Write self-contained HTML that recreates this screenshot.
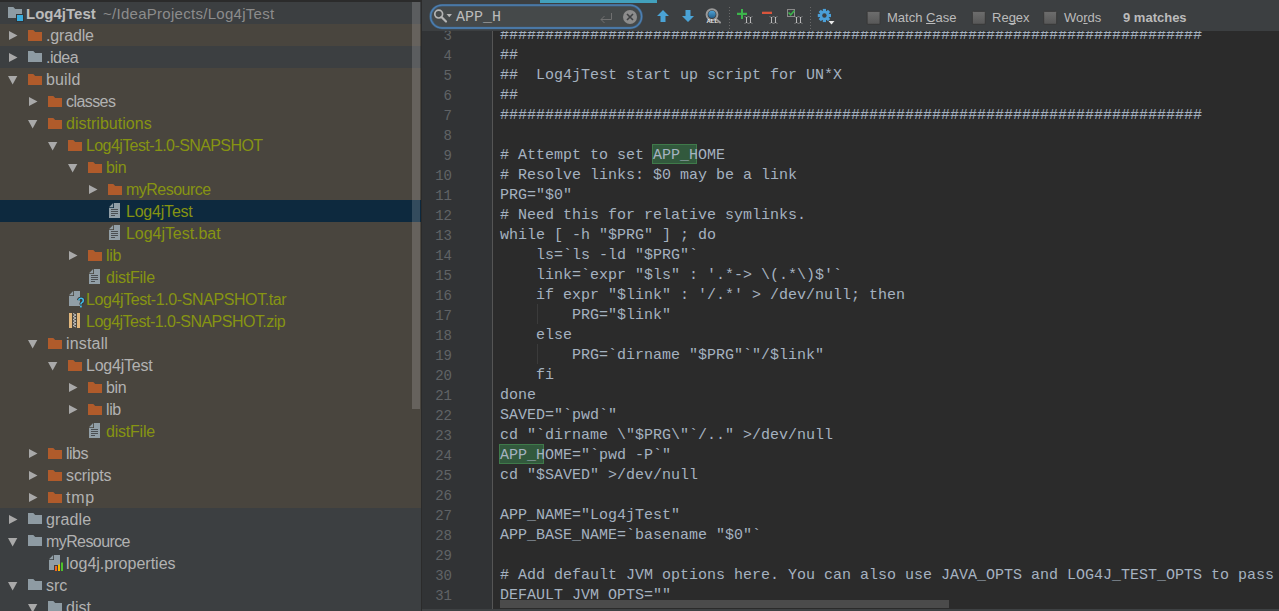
<!DOCTYPE html>
<html><head><meta charset="utf-8">
<style>
html,body{margin:0;padding:0;}
body{width:1279px;height:611px;overflow:hidden;position:relative;background:#2b2b2b;font-family:"Liberation Sans",sans-serif;}
.abs{position:absolute;}
#left{position:absolute;left:0;top:0;width:421px;height:611px;background:#3c3f41;overflow:hidden;}
.row{position:absolute;left:0;width:421px;height:22px;}
.ic{position:absolute;line-height:0;}
.ic svg{display:block;}
.tt{position:absolute;top:1px;height:22px;line-height:22px;font-size:16px;white-space:pre;}
#editor{position:absolute;left:422px;top:0;width:857px;height:611px;background:#2b2b2b;overflow:hidden;}
#gutter{position:absolute;left:422px;top:0;width:70px;height:611px;background:#313335;}
.ln{position:absolute;left:422px;width:30px;text-align:right;height:20px;line-height:20px;font-family:"Liberation Mono",monospace;font-size:14px;color:#606366;}
.cl{position:absolute;left:500px;height:20px;line-height:20px;font-family:"Liberation Mono",monospace;font-size:15px;color:#a5b2c0;white-space:pre;}
.hl{position:absolute;height:18px;background:#32593d;border:1px solid #3f7a4a;}
#toolbar{position:absolute;left:422px;top:0;width:857px;height:31px;background:#3c3f41;}
.cb{position:absolute;top:11px;width:12px;height:12px;background:#4f5254;border:1px solid #5e6060;border-radius:1px;}
.tl{position:absolute;top:0;height:31px;line-height:35px;font-size:13px;color:#bbbbbb;white-space:pre;}
u{text-decoration:underline;text-underline-offset:1px;text-decoration-skip-ink:none;}
</style></head><body>
<div id="left">
<div class="abs" style="left:0;top:0;width:421px;height:2px;background:#2b2b2b"></div>
<div class="abs" style="left:8px;top:7px;line-height:0"><svg width="16" height="15" viewBox="0 0 16 15"><path d="M0 0 H5.3 L7.2 2 H14 V11 H0Z" fill="#8e9ba3"/><rect x="8" y="7" width="8" height="8" fill="#323436"/><rect x="9" y="8" width="6" height="6" fill="#38abdc"/></svg></div>
<div class="abs" style="left:26px;top:2px;height:22px;line-height:23px;font-size:15px;color:#bbbbbb;white-space:pre;font-weight:bold">Log4jTest</div>
<div class="abs" style="left:103px;top:2px;height:22px;line-height:23px;font-size:15px;color:#8c8c8c;white-space:pre;letter-spacing:0.28px">~/IdeaProjects/Log4jTest</div>
<div class="row" style="top:24px;background:#49453e">
<div class="ic" style="left:9px;top:6px"><svg width="9" height="11" viewBox="0 0 9 11"><path d="M0 0.9 L8.5 5.4 L0 9.9Z" fill="#a9a9a9"/></svg></div>
<div class="ic" style="left:28px;top:6px"><svg width="15" height="12" viewBox="0 0 15 12"><path d="M0 0 H5.3 L7.2 2 H14 V11 H0Z" fill="#b05b2b"/></svg></div>
<div class="tt" style="left:46px;color:#b2b2b2;letter-spacing:-0.167px">.gradle</div>
</div>
<div class="row" style="top:46px;background:#3c3f41">
<div class="ic" style="left:9px;top:6px"><svg width="9" height="11" viewBox="0 0 9 11"><path d="M0 0.9 L8.5 5.4 L0 9.9Z" fill="#a9a9a9"/></svg></div>
<div class="ic" style="left:28px;top:5px"><svg width="15" height="12" viewBox="0 0 15 12"><path d="M0 0 H5.3 L7.2 2 H14 V11 H0Z" fill="#8e9ba3"/></svg></div>
<div class="tt" style="left:46px;color:#b2b2b2;letter-spacing:-0.525px">.idea</div>
</div>
<div class="row" style="top:68px;background:#49453e">
<div class="ic" style="left:8px;top:8px"><svg width="10" height="9" viewBox="0 0 10 9"><path d="M0 0 L9.3 0 L4.65 8.5Z" fill="#a9a9a9"/></svg></div>
<div class="ic" style="left:28px;top:6px"><svg width="15" height="12" viewBox="0 0 15 12"><path d="M0 0 H5.3 L7.2 2 H14 V11 H0Z" fill="#b05b2b"/></svg></div>
<div class="tt" style="left:46px;color:#b2b2b2;letter-spacing:0.125px">build</div>
</div>
<div class="row" style="top:90px;background:#49453e">
<div class="ic" style="left:29px;top:6px"><svg width="9" height="11" viewBox="0 0 9 11"><path d="M0 0.9 L8.5 5.4 L0 9.9Z" fill="#a9a9a9"/></svg></div>
<div class="ic" style="left:48px;top:6px"><svg width="15" height="12" viewBox="0 0 15 12"><path d="M0 0 H5.3 L7.2 2 H14 V11 H0Z" fill="#b05b2b"/></svg></div>
<div class="tt" style="left:66px;color:#b2b2b2;letter-spacing:-0.567px">classes</div>
</div>
<div class="row" style="top:112px;background:#49453e">
<div class="ic" style="left:28px;top:8px"><svg width="10" height="9" viewBox="0 0 10 9"><path d="M0 0 L9.3 0 L4.65 8.5Z" fill="#a9a9a9"/></svg></div>
<div class="ic" style="left:48px;top:6px"><svg width="15" height="12" viewBox="0 0 15 12"><path d="M0 0 H5.3 L7.2 2 H14 V11 H0Z" fill="#b05b2b"/></svg></div>
<div class="tt" style="left:66px;color:#869412;letter-spacing:0.025px">distributions</div>
</div>
<div class="row" style="top:134px;background:#49453e">
<div class="ic" style="left:48px;top:8px"><svg width="10" height="9" viewBox="0 0 10 9"><path d="M0 0 L9.3 0 L4.65 8.5Z" fill="#a9a9a9"/></svg></div>
<div class="ic" style="left:68px;top:6px"><svg width="15" height="12" viewBox="0 0 15 12"><path d="M0 0 H5.3 L7.2 2 H14 V11 H0Z" fill="#b05b2b"/></svg></div>
<div class="tt" style="left:86px;color:#869412;letter-spacing:-0.59px">Log4jTest-1.0-SNAPSHOT</div>
</div>
<div class="row" style="top:156px;background:#49453e">
<div class="ic" style="left:68px;top:8px"><svg width="10" height="9" viewBox="0 0 10 9"><path d="M0 0 L9.3 0 L4.65 8.5Z" fill="#a9a9a9"/></svg></div>
<div class="ic" style="left:88px;top:6px"><svg width="15" height="12" viewBox="0 0 15 12"><path d="M0 0 H5.3 L7.2 2 H14 V11 H0Z" fill="#b05b2b"/></svg></div>
<div class="tt" style="left:106px;color:#869412;letter-spacing:-0.4px">bin</div>
</div>
<div class="row" style="top:178px;background:#49453e">
<div class="ic" style="left:89px;top:6px"><svg width="9" height="11" viewBox="0 0 9 11"><path d="M0 0.9 L8.5 5.4 L0 9.9Z" fill="#a9a9a9"/></svg></div>
<div class="ic" style="left:108px;top:6px"><svg width="15" height="12" viewBox="0 0 15 12"><path d="M0 0 H5.3 L7.2 2 H14 V11 H0Z" fill="#b05b2b"/></svg></div>
<div class="tt" style="left:126px;color:#869412;letter-spacing:-0.522px">myResource</div>
</div>
<div class="row" style="top:200px;background:#0d293e">
<div class="ic" style="left:109px;top:3px"><svg width="12" height="16" viewBox="0 0 12 16"><path d="M5 0 H11 V15 H0 V5 H5Z" fill="#919ea6"/><path d="M0 4.2 L4.2 0 V4.2Z" fill="#919ea6"/><g fill="#4b4f52"><rect x="2" y="6" width="7" height="1"/><rect x="2" y="8" width="7" height="1"/><rect x="2" y="10" width="7" height="1"/><rect x="2" y="12" width="4" height="1"/></g></svg></div>
<div class="tt" style="left:126px;color:#869412;letter-spacing:-0.212px">Log4jTest</div>
</div>
<div class="row" style="top:222px;background:#49453e">
<div class="ic" style="left:109px;top:3px"><svg width="12" height="16" viewBox="0 0 12 16"><path d="M5 0 H11 V15 H0 V5 H5Z" fill="#919ea6"/><path d="M0 4.2 L4.2 0 V4.2Z" fill="#919ea6"/><g fill="#4b4f52"><rect x="2" y="6" width="7" height="1"/><rect x="2" y="8" width="7" height="1"/><rect x="2" y="10" width="7" height="1"/><rect x="2" y="12" width="4" height="1"/></g></svg></div>
<div class="tt" style="left:126px;color:#869412;letter-spacing:-0.05px">Log4jTest.bat</div>
</div>
<div class="row" style="top:244px;background:#49453e">
<div class="ic" style="left:69px;top:6px"><svg width="9" height="11" viewBox="0 0 9 11"><path d="M0 0.9 L8.5 5.4 L0 9.9Z" fill="#a9a9a9"/></svg></div>
<div class="ic" style="left:88px;top:6px"><svg width="15" height="12" viewBox="0 0 15 12"><path d="M0 0 H5.3 L7.2 2 H14 V11 H0Z" fill="#b05b2b"/></svg></div>
<div class="tt" style="left:106px;color:#869412;letter-spacing:-0.35px">lib</div>
</div>
<div class="row" style="top:266px;background:#49453e">
<div class="ic" style="left:89px;top:3px"><svg width="12" height="16" viewBox="0 0 12 16"><path d="M5 0 H11 V15 H0 V5 H5Z" fill="#919ea6"/><path d="M0 4.2 L4.2 0 V4.2Z" fill="#919ea6"/><g fill="#4b4f52"><rect x="2" y="6" width="7" height="1"/><rect x="2" y="8" width="7" height="1"/><rect x="2" y="10" width="7" height="1"/><rect x="2" y="12" width="4" height="1"/></g></svg></div>
<div class="tt" style="left:106px;color:#869412;letter-spacing:-0.229px">distFile</div>
</div>
<div class="row" style="top:288px;background:#49453e">
<div class="ic" style="left:69px;top:3px"><svg width="16" height="17" viewBox="0 0 16 17"><path d="M5 0 H11 V15 H0 V5 H5Z" fill="#919ea6"/><path d="M0 4.2 L4.2 0 V4.2Z" fill="#919ea6"/><path d="M9.6 9.3 Q10 7.3 12 7.3 Q14.3 7.3 14.3 9.4 Q14.3 10.8 12.8 11.6 Q11.9 12.1 11.9 13.4" fill="none" stroke="#383633" stroke-width="3.2"/><path d="M9.6 9.3 Q10 7.3 12 7.3 Q14.3 7.3 14.3 9.4 Q14.3 10.8 12.8 11.6 Q11.9 12.1 11.9 13.4" fill="none" stroke="#3dbbe8" stroke-width="1.6"/><rect x="11" y="14.6" width="1.8" height="1.8" fill="#3dbbe8"/></svg></div>
<div class="tt" style="left:86px;color:#869412;letter-spacing:-0.404px">Log4jTest-1.0-SNAPSHOT.tar</div>
</div>
<div class="row" style="top:310px;background:#49453e">
<div class="ic" style="left:69px;top:3px"><svg width="12" height="16" viewBox="0 0 12 16"><rect x="0" y="0" width="3" height="15" fill="#e0b67c"/><rect x="8" y="0" width="3" height="15" fill="#e0b67c"/><path d="M4 0.5 L7 2 L4 3.5 L7 5 L4 6.5 L7 8 L4 9.5 L7 11 L4 12.5 L7 14" stroke="#c8c8c8" stroke-width="1" fill="none"/></svg></div>
<div class="tt" style="left:86px;color:#869412;letter-spacing:-0.512px">Log4jTest-1.0-SNAPSHOT.zip</div>
</div>
<div class="row" style="top:332px;background:#49453e">
<div class="ic" style="left:28px;top:8px"><svg width="10" height="9" viewBox="0 0 10 9"><path d="M0 0 L9.3 0 L4.65 8.5Z" fill="#a9a9a9"/></svg></div>
<div class="ic" style="left:48px;top:6px"><svg width="15" height="12" viewBox="0 0 15 12"><path d="M0 0 H5.3 L7.2 2 H14 V11 H0Z" fill="#b05b2b"/></svg></div>
<div class="tt" style="left:66px;color:#b2b2b2;letter-spacing:0.167px">install</div>
</div>
<div class="row" style="top:354px;background:#49453e">
<div class="ic" style="left:48px;top:8px"><svg width="10" height="9" viewBox="0 0 10 9"><path d="M0 0 L9.3 0 L4.65 8.5Z" fill="#a9a9a9"/></svg></div>
<div class="ic" style="left:68px;top:6px"><svg width="15" height="12" viewBox="0 0 15 12"><path d="M0 0 H5.3 L7.2 2 H14 V11 H0Z" fill="#b05b2b"/></svg></div>
<div class="tt" style="left:86px;color:#b2b2b2;letter-spacing:-0.225px">Log4jTest</div>
</div>
<div class="row" style="top:376px;background:#49453e">
<div class="ic" style="left:69px;top:6px"><svg width="9" height="11" viewBox="0 0 9 11"><path d="M0 0.9 L8.5 5.4 L0 9.9Z" fill="#a9a9a9"/></svg></div>
<div class="ic" style="left:88px;top:6px"><svg width="15" height="12" viewBox="0 0 15 12"><path d="M0 0 H5.3 L7.2 2 H14 V11 H0Z" fill="#b05b2b"/></svg></div>
<div class="tt" style="left:106px;color:#b2b2b2;letter-spacing:-0.3px">bin</div>
</div>
<div class="row" style="top:398px;background:#49453e">
<div class="ic" style="left:69px;top:6px"><svg width="9" height="11" viewBox="0 0 9 11"><path d="M0 0.9 L8.5 5.4 L0 9.9Z" fill="#a9a9a9"/></svg></div>
<div class="ic" style="left:88px;top:6px"><svg width="15" height="12" viewBox="0 0 15 12"><path d="M0 0 H5.3 L7.2 2 H14 V11 H0Z" fill="#b05b2b"/></svg></div>
<div class="tt" style="left:106px;color:#b2b2b2;letter-spacing:-0.4px">lib</div>
</div>
<div class="row" style="top:420px;background:#49453e">
<div class="ic" style="left:89px;top:3px"><svg width="12" height="16" viewBox="0 0 12 16"><path d="M5 0 H11 V15 H0 V5 H5Z" fill="#919ea6"/><path d="M0 4.2 L4.2 0 V4.2Z" fill="#919ea6"/><g fill="#4b4f52"><rect x="2" y="6" width="7" height="1"/><rect x="2" y="8" width="7" height="1"/><rect x="2" y="10" width="7" height="1"/><rect x="2" y="12" width="4" height="1"/></g></svg></div>
<div class="tt" style="left:106px;color:#869412;letter-spacing:-0.214px">distFile</div>
</div>
<div class="row" style="top:442px;background:#49453e">
<div class="ic" style="left:29px;top:6px"><svg width="9" height="11" viewBox="0 0 9 11"><path d="M0 0.9 L8.5 5.4 L0 9.9Z" fill="#a9a9a9"/></svg></div>
<div class="ic" style="left:48px;top:6px"><svg width="15" height="12" viewBox="0 0 15 12"><path d="M0 0 H5.3 L7.2 2 H14 V11 H0Z" fill="#b05b2b"/></svg></div>
<div class="tt" style="left:66px;color:#b2b2b2;letter-spacing:-0.533px">libs</div>
</div>
<div class="row" style="top:464px;background:#49453e">
<div class="ic" style="left:29px;top:6px"><svg width="9" height="11" viewBox="0 0 9 11"><path d="M0 0.9 L8.5 5.4 L0 9.9Z" fill="#a9a9a9"/></svg></div>
<div class="ic" style="left:48px;top:6px"><svg width="15" height="12" viewBox="0 0 15 12"><path d="M0 0 H5.3 L7.2 2 H14 V11 H0Z" fill="#b05b2b"/></svg></div>
<div class="tt" style="left:66px;color:#b2b2b2;letter-spacing:-0.117px">scripts</div>
</div>
<div class="row" style="top:486px;background:#49453e">
<div class="ic" style="left:29px;top:6px"><svg width="9" height="11" viewBox="0 0 9 11"><path d="M0 0.9 L8.5 5.4 L0 9.9Z" fill="#a9a9a9"/></svg></div>
<div class="ic" style="left:48px;top:6px"><svg width="15" height="12" viewBox="0 0 15 12"><path d="M0 0 H5.3 L7.2 2 H14 V11 H0Z" fill="#b05b2b"/></svg></div>
<div class="tt" style="left:66px;color:#b2b2b2;letter-spacing:0.8px">tmp</div>
</div>
<div class="row" style="top:508px;background:#3c3f41">
<div class="ic" style="left:9px;top:6px"><svg width="9" height="11" viewBox="0 0 9 11"><path d="M0 0.9 L8.5 5.4 L0 9.9Z" fill="#a9a9a9"/></svg></div>
<div class="ic" style="left:28px;top:5px"><svg width="15" height="12" viewBox="0 0 15 12"><path d="M0 0 H5.3 L7.2 2 H14 V11 H0Z" fill="#8e9ba3"/></svg></div>
<div class="tt" style="left:46px;color:#b2b2b2;letter-spacing:0.12px">gradle</div>
</div>
<div class="row" style="top:530px;background:#3c3f41">
<div class="ic" style="left:8px;top:8px"><svg width="10" height="9" viewBox="0 0 10 9"><path d="M0 0 L9.3 0 L4.65 8.5Z" fill="#a9a9a9"/></svg></div>
<div class="ic" style="left:28px;top:5px"><svg width="15" height="12" viewBox="0 0 15 12"><path d="M0 0 H5.3 L7.2 2 H14 V11 H0Z" fill="#8e9ba3"/></svg></div>
<div class="tt" style="left:46px;color:#b2b2b2;letter-spacing:-0.589px">myResource</div>
</div>
<div class="row" style="top:552px;background:#3c3f41">
<div class="ic" style="left:49px;top:3px"><svg width="16" height="17" viewBox="0 0 16 17"><path d="M5 0 H11 V15 H0 V5 H5Z" fill="#919ea6"/><path d="M0 4.2 L4.2 0 V4.2Z" fill="#919ea6"/><rect x="5" y="10" width="10" height="7" fill="#3c3f41"/><rect x="6" y="11" width="2" height="5" fill="#f26522"/><rect x="9" y="9.5" width="2" height="6.5" fill="#f5b800"/><rect x="12" y="7.5" width="2" height="8.5" fill="#4cc22a"/></svg></div>
<div class="tt" style="left:66px;color:#b2b2b2;letter-spacing:0.013px">log4j.properties</div>
</div>
<div class="row" style="top:574px;background:#3c3f41">
<div class="ic" style="left:8px;top:8px"><svg width="10" height="9" viewBox="0 0 10 9"><path d="M0 0 L9.3 0 L4.65 8.5Z" fill="#a9a9a9"/></svg></div>
<div class="ic" style="left:28px;top:5px"><svg width="15" height="12" viewBox="0 0 15 12"><path d="M0 0 H5.3 L7.2 2 H14 V11 H0Z" fill="#8e9ba3"/></svg></div>
<div class="tt" style="left:46px;color:#b2b2b2;letter-spacing:-0.1px">src</div>
</div>
<div class="row" style="top:596px;background:#3c3f41">
<div class="ic" style="left:28px;top:8px"><svg width="10" height="9" viewBox="0 0 10 9"><path d="M0 0 L9.3 0 L4.65 8.5Z" fill="#a9a9a9"/></svg></div>
<div class="ic" style="left:48px;top:5px"><svg width="15" height="12" viewBox="0 0 15 12"><path d="M0 0 H5.3 L7.2 2 H14 V11 H0Z" fill="#8e9ba3"/></svg></div>
<div class="tt" style="left:66px;color:#b2b2b2;letter-spacing:0px">dist</div>
</div>
<div class="abs" style="left:412px;top:2px;width:8px;height:407px;background:rgba(255,255,255,0.16)"></div>
</div>
<div class="abs" style="left:421px;top:0;width:1px;height:611px;background:#2b2b2b"></div>
<div id="gutter"></div>
<div class="abs" style="left:492px;top:0;width:1px;height:611px;background:#555555"></div>
<div class="hl" style="left:652px;top:144px;width:43px"></div>
<div class="hl" style="left:499px;top:444px;width:43px"></div>
<div class="abs" style="left:537px;top:304px;width:1px;height:20px;background:#3b3b3b"></div>
<div class="abs" style="left:537px;top:344px;width:1px;height:20px;background:#3b3b3b"></div>
<div class="ln" style="top:26px">3</div>
<div class="cl" style="top:26px">##############################################################################</div>
<div class="ln" style="top:46px">4</div>
<div class="cl" style="top:46px">##</div>
<div class="ln" style="top:66px">5</div>
<div class="cl" style="top:66px">##  Log4jTest start up script for UN*X</div>
<div class="ln" style="top:86px">6</div>
<div class="cl" style="top:86px">##</div>
<div class="ln" style="top:106px">7</div>
<div class="cl" style="top:106px">##############################################################################</div>
<div class="ln" style="top:126px">8</div>
<div class="cl" style="top:126px"></div>
<div class="ln" style="top:146px">9</div>
<div class="cl" style="top:146px"># Attempt to set APP_HOME</div>
<div class="ln" style="top:166px">10</div>
<div class="cl" style="top:166px"># Resolve links: $0 may be a link</div>
<div class="ln" style="top:186px">11</div>
<div class="cl" style="top:186px">PRG=&quot;$0&quot;</div>
<div class="ln" style="top:206px">12</div>
<div class="cl" style="top:206px"># Need this for relative symlinks.</div>
<div class="ln" style="top:226px">13</div>
<div class="cl" style="top:226px">while [ -h &quot;$PRG&quot; ] ; do</div>
<div class="ln" style="top:246px">14</div>
<div class="cl" style="top:246px">    ls=`ls -ld &quot;$PRG&quot;`</div>
<div class="ln" style="top:266px">15</div>
<div class="cl" style="top:266px">    link=`expr &quot;$ls&quot; : &#x27;.*-&gt; \(.*\)$&#x27;`</div>
<div class="ln" style="top:286px">16</div>
<div class="cl" style="top:286px">    if expr &quot;$link&quot; : &#x27;/.*&#x27; &gt; /dev/null; then</div>
<div class="ln" style="top:306px">17</div>
<div class="cl" style="top:306px">        PRG=&quot;$link&quot;</div>
<div class="ln" style="top:326px">18</div>
<div class="cl" style="top:326px">    else</div>
<div class="ln" style="top:346px">19</div>
<div class="cl" style="top:346px">        PRG=`dirname &quot;$PRG&quot;`&quot;/$link&quot;</div>
<div class="ln" style="top:366px">20</div>
<div class="cl" style="top:366px">    fi</div>
<div class="ln" style="top:386px">21</div>
<div class="cl" style="top:386px">done</div>
<div class="ln" style="top:406px">22</div>
<div class="cl" style="top:406px">SAVED=&quot;`pwd`&quot;</div>
<div class="ln" style="top:426px">23</div>
<div class="cl" style="top:426px">cd &quot;`dirname \&quot;$PRG\&quot;`/..&quot; &gt;/dev/null</div>
<div class="ln" style="top:446px">24</div>
<div class="cl" style="top:446px">APP_HOME=&quot;`pwd -P`&quot;</div>
<div class="ln" style="top:466px">25</div>
<div class="cl" style="top:466px">cd &quot;$SAVED&quot; &gt;/dev/null</div>
<div class="ln" style="top:486px">26</div>
<div class="cl" style="top:486px"></div>
<div class="ln" style="top:506px">27</div>
<div class="cl" style="top:506px">APP_NAME=&quot;Log4jTest&quot;</div>
<div class="ln" style="top:526px">28</div>
<div class="cl" style="top:526px">APP_BASE_NAME=`basename &quot;$0&quot;`</div>
<div class="ln" style="top:546px">29</div>
<div class="cl" style="top:546px"></div>
<div class="ln" style="top:566px">30</div>
<div class="cl" style="top:566px"># Add default JVM options here. You can also use JAVA_OPTS and LOG4J_TEST_OPTS to pass JVM options to this script.</div>
<div class="ln" style="top:586px">31</div>
<div class="cl" style="top:586px">DEFAULT_JVM_OPTS=&quot;&quot;</div>
<div class="ln" style="top:606px">32</div>
<div class="cl" style="top:606px"></div>
<div class="abs" style="left:422px;top:609px;width:857px;height:2px;background:#3e4143"></div>
<div class="abs" style="left:500px;top:600px;width:449px;height:8px;background:#4b4b4b"></div>
<div id="toolbar"></div>
<div class="abs" style="left:540px;top:0;width:117px;height:3px;background:#42a0bc"></div>
<svg class="abs" style="left:0;top:0" width="700" height="31"><rect x="430.6" y="5.2" width="211" height="22.8" rx="11.4" fill="#45494a" stroke="#40607e" stroke-width="2.6"/><rect x="430.6" y="5.2" width="211" height="22.8" rx="11.4" fill="none" stroke="#4d80b4" stroke-width="1.3"/></svg>
<div class="abs" style="left:456px;top:7px;height:22px;line-height:22px;font-family:'Liberation Mono',monospace;font-size:15px;color:#bbbbbb;white-space:pre">APP_H</div>
<svg class="abs" style="left:0;top:0" width="1279" height="31" viewBox="0 0 1279 31">
 <!-- magnifier in field -->
 <circle cx="438.7" cy="14.1" r="3.9" fill="none" stroke="#b4b4b4" stroke-width="1.7"/>
 <path d="M441.5 17 L446 21.5" stroke="#b4b4b4" stroke-width="2.2" stroke-linecap="round"/>
 <path d="M446.5 14 H452 L449.25 17.3Z" fill="#b4b4b4"/>
 <!-- return -->
 <path d="M611.5 13 V19.5 H601" stroke="#707070" stroke-width="1" fill="none"/>
 <path d="M604.5 16 L601 19.5 L604.5 23" stroke="#707070" stroke-width="1" fill="none"/>
 <!-- clear -->
 <circle cx="630" cy="17" r="7" fill="#8c8c8c"/>
 <path d="M627 14 L633 20 M633 14 L627 20" stroke="#3f4143" stroke-width="1.6"/>
 <!-- up arrow -->
 <path d="M663 10 L669 16 H665.5 V22 H660.5 V16 H657Z" fill="#4aa3d6"/>
 <!-- down arrow -->
 <path d="M688 22 L694 16 H690.5 V10 H685.5 V16 H682Z" fill="#4aa3d6"/>
 <!-- find all -->
 <defs><linearGradient id="fag" x1="0" y1="0" x2="0" y2="1"><stop offset="0" stop-color="#4fa3d6"/><stop offset="1" stop-color="#245f8c"/></linearGradient></defs>
 <circle cx="712" cy="14.6" r="5.4" fill="none" stroke="#9a9a9a" stroke-width="2"/>
 <circle cx="712" cy="14.3" r="3.6" fill="url(#fag)"/>
 <path d="M716 19 L720 22.5" stroke="#9a9a9a" stroke-width="2" stroke-linecap="round"/>
 <text x="706.5" y="23.3" font-family="Liberation Sans" font-weight="bold" font-size="6" fill="#e8e8e8">ALL</text>
 <!-- separators -->
 <path d="M729.5 7 V29" stroke="#6a6a6a" stroke-width="1" stroke-dasharray="1 2"/>
 <path d="M810.5 7 V29" stroke="#6a6a6a" stroke-width="1" stroke-dasharray="1 2"/>
 <!-- plus -->
 <path d="M737 12.7 H747 V15 H737Z M741 9 H743 V19 H741Z" fill="#3cb44b"/>
 <!-- minus -->
 <path d="M762 11.7 H772 V14 H762Z" fill="#d9553c"/>
 <!-- check box -->
 <rect x="787.5" y="9.5" width="7" height="7" fill="none" stroke="#8a8a8a" stroke-width="1"/>
 <path d="M788.5 12.5 L790.7 14.8 L794.5 10.5" stroke="#3cb44b" stroke-width="1.5" fill="none"/>
 <!-- I-beams -->
 <g stroke="#c4c4c4" stroke-width="0.9" fill="none"><path d="M745.0 16.5 L746.0 17.5 H747.0 L748.0 16.5 M746.5 17.5 V22.5 M745.0 23.5 L746.0 22.5 H747.0 L748.0 23.5 M749.0 16.5 L750.0 17.5 H751.0 L752.0 16.5 M750.5 17.5 V22.5 M749.0 23.5 L750.0 22.5 H751.0 L752.0 23.5 M770.0 16.5 L771.0 17.5 H772.0 L773.0 16.5 M771.5 17.5 V22.5 M770.0 23.5 L771.0 22.5 H772.0 L773.0 23.5 M774.0 16.5 L775.0 17.5 H776.0 L777.0 16.5 M775.5 17.5 V22.5 M774.0 23.5 L775.0 22.5 H776.0 L777.0 23.5 M795.0 16.5 L796.0 17.5 H797.0 L798.0 16.5 M796.5 17.5 V22.5 M795.0 23.5 L796.0 22.5 H797.0 L798.0 23.5 M799.0 16.5 L800.0 17.5 H801.0 L802.0 16.5 M800.5 17.5 V22.5 M799.0 23.5 L800.0 22.5 H801.0 L802.0 23.5"/></g>
 <!-- gear -->
 <g transform="translate(824.4 15.5)" fill="#4a9fd8">
  <circle r="4.8"/>
  <g id="teeth"><rect x="-1.6" y="-6.6" width="3.2" height="3"/><rect x="-1.6" y="3.6" width="3.2" height="3"/><rect x="-6.6" y="-1.6" width="3" height="3.2"/><rect x="3.6" y="-1.6" width="3" height="3.2"/></g>
  <g transform="rotate(45)"><rect x="-1.6" y="-6.6" width="3.2" height="3"/><rect x="-1.6" y="3.6" width="3.2" height="3"/><rect x="-6.6" y="-1.6" width="3" height="3.2"/><rect x="3.6" y="-1.6" width="3" height="3.2"/></g>
  <circle r="2.2" fill="#3c3f41"/>
 </g>
 <path d="M828.5 21 H834.5 L831.5 24.5Z" fill="#e8e8e8"/>
 <!-- checkboxes -->
 <defs><linearGradient id="cbg" x1="0" y1="0" x2="0" y2="1"><stop offset="0" stop-color="#6e6e6e"/><stop offset="1" stop-color="#575757"/></linearGradient></defs>
 <rect x="867.1" y="11.3" width="13" height="13" rx="1" fill="url(#cbg)" stroke="#383838" stroke-width="1"/>
 <rect x="972.3" y="11.3" width="13" height="13" rx="1" fill="url(#cbg)" stroke="#383838" stroke-width="1"/>
 <rect x="1043.7" y="11.3" width="13" height="13" rx="1" fill="url(#cbg)" stroke="#383838" stroke-width="1"/>
</svg>
<div class="tl" style="left:887px">Match <u>C</u>ase</div>
<div class="tl" style="left:992px">Re<u>g</u>ex</div>
<div class="tl" style="left:1064px">Wo<u>r</u>ds</div>
<div class="tl" style="left:1123px;font-weight:bold">9 matches</div>
</body></html>
